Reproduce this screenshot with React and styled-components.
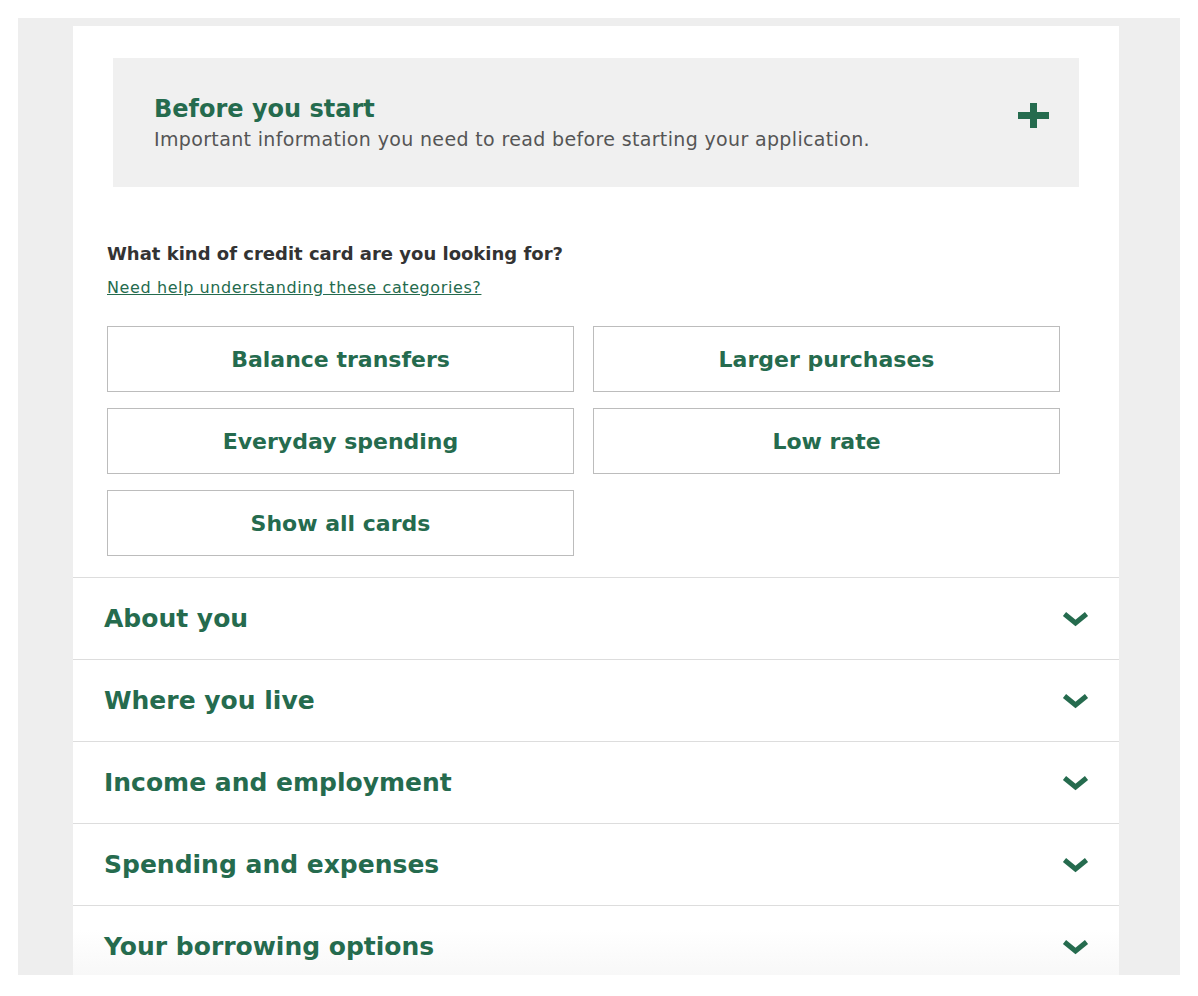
import React from 'react';
import styled, {createGlobalStyle} from 'styled-components';

const green = '#256b4e';

const GlobalStyle = createGlobalStyle`
        body {
            margin: 0;
            background: #ffffff;
            font-family: "DejaVu Sans", "Open Sans", sans-serif;
        }
    `,
    Page = styled.div`
        padding: 18px 18px 21px 18px;
    `,
    Frame = styled.div`
        height: 957px;
        overflow: hidden;
        background: #eeeeee;
        padding: 8px 61px 0 55px;
        box-sizing: border-box;
    `,
    Panel = styled.div`
        background: #ffffff;
        padding-top: 32px;
    `,
    Intro = styled.div`
        margin: 0 40px;
        background: #f0f0f0;
        height: 129px;
        box-sizing: border-box;
        padding: 0 30px 0 41px;
        display: flex;
        align-items: center;
        justify-content: space-between;
    `,
    IntroTitle = styled.div`
        color: ${green};
        font-size: 24px;
        font-weight: 700;
        line-height: 30px;
        margin-bottom: 3px;
    `,
    IntroText = styled.div`
        color: #555555;
        font-size: 19px;
        letter-spacing: 0.35px;
        line-height: 24px;
    `,
    ToggleIcon = styled.svg`
        flex-shrink: 0;
        margin-bottom: 14px;
    `,
    Finder = styled.div`
        padding: 55px 59px 21px 34px;
    `,
    Question = styled.div`
        color: #333333;
        font-size: 18px;
        font-weight: 700;
        line-height: 24px;
    `,
    HelpLink = styled.a`
        display: inline-block;
        margin-top: 12px;
        color: ${green};
        font-size: 16px;
        letter-spacing: 0.6px;
        line-height: 20px;
        text-decoration: underline;
    `,
    CardGrid = styled.div`
        display: grid;
        grid-template-columns: 1fr 1fr;
        column-gap: 19px;
        row-gap: 16px;
        margin-top: 28px;
    `,
    CardButton = styled.button`
        height: 66px;
        background: #ffffff;
        border: 1px solid #bcbcbc;
        color: ${green};
        font-family: inherit;
        font-size: 22px;
        font-weight: 700;
        cursor: pointer;
    `,
    Section = styled.div`
        display: flex;
        align-items: center;
        justify-content: space-between;
        height: 81px;
        padding: 0 30px 0 31px;
        border-top: 1px solid #dddddd;
        background: ${(p) => (p.$last ? 'linear-gradient(to bottom, #ffffff 30%, #f6f6f6 100%)' : '#ffffff')};
    `,
    SectionTitle = styled.div`
        color: ${green};
        font-size: 25px;
        font-weight: 700;
    `;

const Plus = () => (
    <ToggleIcon width="31" height="25" viewBox="0 0 31 25">
        <path d="M0 12.5H31M15.5 0V25" stroke={green} strokeWidth="7" />
    </ToggleIcon>
);

const Chevron = () => (
    <svg width="27" height="16" viewBox="0 0 27 16">
        <path d="M2.5 3L13.5 12L24.5 3" fill="none" stroke={green} strokeWidth="5" />
    </svg>
);

const cards = ['Balance transfers', 'Larger purchases', 'Everyday spending', 'Low rate', 'Show all cards'];
const sections = ['About you', 'Where you live', 'Income and employment', 'Spending and expenses', 'Your borrowing options'];

function App() {
    return (
        <Page>
            <GlobalStyle />
            <Frame>
                <Panel>
                    <Intro>
                        <div>
                            <IntroTitle>Before you start</IntroTitle>
                            <IntroText>Important information you need to read before starting your application.</IntroText>
                        </div>
                        <Plus />
                    </Intro>
                    <Finder>
                        <Question>What kind of credit card are you looking for?</Question>
                        <HelpLink href="#">Need help understanding these categories?</HelpLink>
                        <CardGrid>
                            {cards.map((c) => (
                                <CardButton key={c}>{c}</CardButton>
                            ))}
                        </CardGrid>
                    </Finder>
                    {sections.map((s, i) => (
                        <Section key={s} $last={i === sections.length - 1}>
                            <SectionTitle>{s}</SectionTitle>
                            <Chevron />
                        </Section>
                    ))}
                </Panel>
            </Frame>
        </Page>
    );
}

export default App;
